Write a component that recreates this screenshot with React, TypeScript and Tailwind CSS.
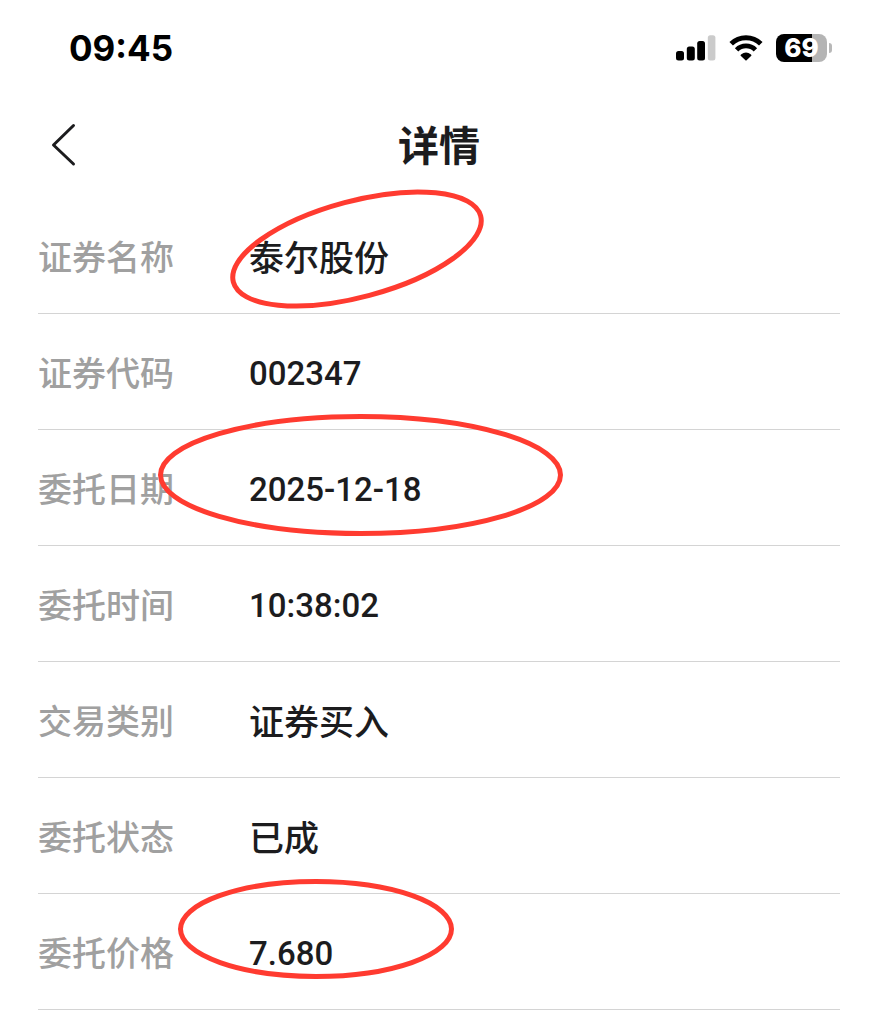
import * as React from 'react';

interface Mark {
  className: string;
  width: number;
  height: number;
  rx: number;
  ry: number;
  angle?: number;
}

interface DetailItem {
  label: string;
  value: string;
  numeric?: boolean;
  mark?: Mark;
}

const items: DetailItem[] = [
  {
    label: '证券名称',
    value: '泰尔股份',
    mark: { className: 'left-48 -top-2', width: 254, height: 118, rx: 128, ry: 48, angle: -15 },
  },
  { label: '证券代码', value: '002347', numeric: true },
  {
    label: '委托日期',
    value: '2025-12-18',
    numeric: true,
    mark: { className: 'left-30 -top-4', width: 405, height: 122, rx: 200, ry: 58.5 },
  },
  { label: '委托时间', value: '10:38:02', numeric: true },
  { label: '交易类别', value: '证券买入' },
  { label: '委托状态', value: '已成' },
  {
    label: '委托价格',
    value: '7.680',
    numeric: true,
    mark: { className: 'left-35 -top-4', width: 276, height: 102, rx: 135.5, ry: 47.5 },
  },
];

const SignalIcon = () => (
  <svg className="w-10 h-[26px]" viewBox="0 0 40 26" aria-hidden="true">
    <rect x="0" y="16" width="8" height="9.5" rx="2.5" fill="#000" />
    <rect x="10.8" y="11.5" width="8" height="14" rx="2.5" fill="#000" />
    <rect x="21.2" y="6" width="7.8" height="19.5" rx="2.5" fill="#000" />
    <rect x="31.8" y="0.3" width="7.6" height="25.2" rx="2.5" fill="#cbcbcb" />
  </svg>
);

const WifiIcon = () => (
  <svg className="w-[34px] h-[26px]" viewBox="0 0 34 26" fill="none" aria-hidden="true">
    <path d="M2.2 8.8A21 21 0 0 1 31.8 8.8" stroke="#000" strokeWidth="5" />
    <path d="M7.6 14.9A13.2 13.2 0 0 1 26.4 14.9" stroke="#000" strokeWidth="4.8" />
    <path d="M17 25.8L11.7 20.8Q11.3 20 12 19.4A8 8 0 0 1 22 19.4Q22.7 20 22.3 20.8Z" fill="#000" />
  </svg>
);

const Battery = () => (
  <div className="flex items-center gap-[2px]">
    <div className="w-[51px] h-7 rounded-lg bg-[linear-gradient(to_right,#000_36px,#b4b4b4_36px)] flex items-center justify-center font-extrabold text-[26px] leading-7 text-white">
      69
    </div>
    <div className="w-[3px] h-[10px] rounded-r-full bg-[#b8b8b8]" />
  </div>
);

// hand-drawn style ring around a value
const Ring: React.FC<{ mark: Mark }> = ({ mark }) => (
  <svg
    className={`absolute overflow-visible pointer-events-none ${mark.className}`}
    width={mark.width}
    height={mark.height}
    aria-hidden="true"
  >
    <ellipse
      cx={mark.width / 2}
      cy={mark.height / 2}
      rx={mark.rx}
      ry={mark.ry}
      transform={`rotate(${mark.angle ?? 0} ${mark.width / 2} ${mark.height / 2})`}
      fill="none"
      stroke="#ff3b30"
      strokeWidth="5"
    />
  </svg>
);

export default function App() {
  return (
    <div className="bg-white font-['Roboto','Noto_Sans_CJK_SC',sans-serif] text-[#1c1c1e] overflow-x-hidden">
      <div className="h-24 pl-[69px] pr-[46px] flex items-center justify-between font-['Inter',sans-serif] text-black">
        <span className="text-[35px] font-bold">09:45</span>
        <div className="flex items-center gap-[13px]">
          <SignalIcon />
          <WifiIcon />
          <Battery />
        </div>
      </div>

      <header className="h-[102px] px-12 grid grid-cols-[1fr_auto_1fr] items-center">
        <button aria-label="返回" className="w-8 h-13 pb-1 flex items-center">
          <svg className="w-8 h-12" viewBox="0 0 32 48" fill="none" stroke="#1c1c1e" strokeWidth="3" strokeLinecap="round">
            <path d="M25.5 4.5L5.5 24L25.5 43" strokeLinejoin="round" />
          </svg>
        </button>
        <h1 className="text-[41px] leading-12 font-bold">详情</h1>
      </header>

      <dl className="px-[38px]">
        {items.map((item) => (
          <div key={item.label} className="relative h-[116px] pt-1 flex items-center border-b border-[#d4d4d4]">
            <dt className="w-[211px] shrink-0 text-[34px] leading-12 font-medium text-[#a0a0a0]">{item.label}</dt>
            <dd className={`leading-12 font-medium ${item.numeric ? 'text-[33px]' : 'pt-1 text-[35px]'}`}>{item.value}</dd>
            {item.mark && <Ring mark={item.mark} />}
          </div>
        ))}
      </dl>
    </div>
  );
}
